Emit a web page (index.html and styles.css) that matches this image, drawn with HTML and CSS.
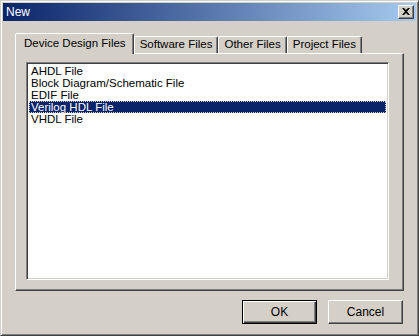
FILE: index.html
```html
<!DOCTYPE html>
<html lang="en">
<head>
  <meta charset="UTF-8" />
  <title>New</title>
  <link rel="stylesheet" href="styles.css">
</head>
<body>
  <div class="window">
    <div class="titlebar">
      <span class="title">New</span>
      <button class="close-btn" type="button">
        <svg width="8" height="7" viewBox="0 0 8 7">
          <path d="M0 0h2l2 2 2-2h2L5 3.5 8 7H6L4 5 2 7H0l3-3.5z" fill="#000" />
        </svg>
      </button>
    </div>

    <div class="content">
      <div class="tabs">
        <div class="tab active">Device Design Files</div>
        <div class="tab">Software Files</div>
        <div class="tab">Other Files</div>
        <div class="tab">Project Files</div>
      </div>

      <div class="panel">
        <ul class="listbox">
          <li>AHDL File</li>
          <li>Block Diagram/Schematic File</li>
          <li>EDIF File</li>
          <li class="selected">Verilog HDL File</li>
          <li>VHDL File</li>
        </ul>
      </div>

      <div class="actions">
        <button class="btn default" type="button">OK</button>
        <button class="btn" type="button">Cancel</button>
      </div>
    </div>
  </div>
</body>
</html>
```

FILE: styles.css
```css
* {
  margin: 0;
  padding: 0;
  box-sizing: border-box;
}

body {
  font-family: 'Liberation Sans', Arial, sans-serif;
  font-size: 12px;
  background: #d4d0c8;
  color: #000;
}

.window {
  width: 419px;
  height: 336px;
  background: #d4d0c8;
  border: 1px solid;
  border-color: #d4d0c8 #404040 #404040 #d4d0c8;
  box-shadow: inset 1px 1px 0 #fff, inset -1px -1px 0 #808080;
  padding: 2px;
}

.titlebar {
  height: 18px;
  display: flex;
  align-items: center;
  justify-content: space-between;
  padding: 0 2px 0 3px;
  background: linear-gradient(to right, #0a246a, #a6caf0);
  color: white;
}

.title {
  font-size: 12px;
}

.close-btn {
  width: 16px;
  height: 14px;
  display: flex;
  align-items: center;
  justify-content: center;
  background: #d4d0c8;
  border: 1px solid;
  border-color: #fff #404040 #404040 #fff;
  box-shadow: inset -1px -1px 0 #808080;
  padding-bottom: 1px;
}

.content {
  padding: 12px 12px 0 12px;
}

.tabs {
  display: flex;
  align-items: flex-end;
  height: 20px;
  position: relative;
  z-index: 1;
  font-size: 11.5px;
}

.tab {
  height: 17px;
  padding: 1px 5px 0 5px;
  border: 1px solid;
  border-bottom: none;
  border-color: #fff #404040 transparent #fff;
  box-shadow: inset -1px 0 0 #808080;
  border-radius: 2px 2px 0 0;
  white-space: nowrap;
}

.tab.active {
  height: 21px;
  margin-bottom: -1px;
  padding: 3px 7px 0 8px;
  background: #d4d0c8;
}

.panel {
  height: 238px;
  border: 1px solid;
  border-color: #fff #404040 #404040 #fff;
  box-shadow: inset -1px -1px 0 #808080;
  padding: 8px 14px 10px 10px;
}

.listbox {
  list-style: none;
  height: 100%;
  background: #fff;
  border: 1px solid;
  border-color: #808080 #fff #fff #808080;
  box-shadow: inset 1px 1px 0 #404040, inset -1px -1px 0 #d4d0c8;
  padding: 2px 2px;
  font-size: 11.5px;
}

.listbox li {
  height: 12px;
  line-height: 12px;
  padding-left: 2px;
  white-space: nowrap;
}

.listbox li.selected {
  background: #0a246a;
  color: #fff;
  outline: 1px dotted #d4d0c8;
  outline-offset: -1px;
}

.actions {
  display: flex;
  justify-content: flex-end;
  gap: 11px;
  padding-top: 9px;
  padding-right: 1px;
}

.btn {
  width: 75px;
  height: 24px;
  font-family: 'Liberation Sans', Arial, sans-serif;
  font-size: 12px;
  background: #d4d0c8;
  border: 1px solid;
  border-color: #fff #404040 #404040 #fff;
  box-shadow: inset -1px -1px 0 #808080;
}

.btn.default {
  border-color: #000;
  box-shadow: inset 1px 1px 0 #fff, inset -1px -1px 0 #404040, inset -2px -2px 0 #808080;
}
```
